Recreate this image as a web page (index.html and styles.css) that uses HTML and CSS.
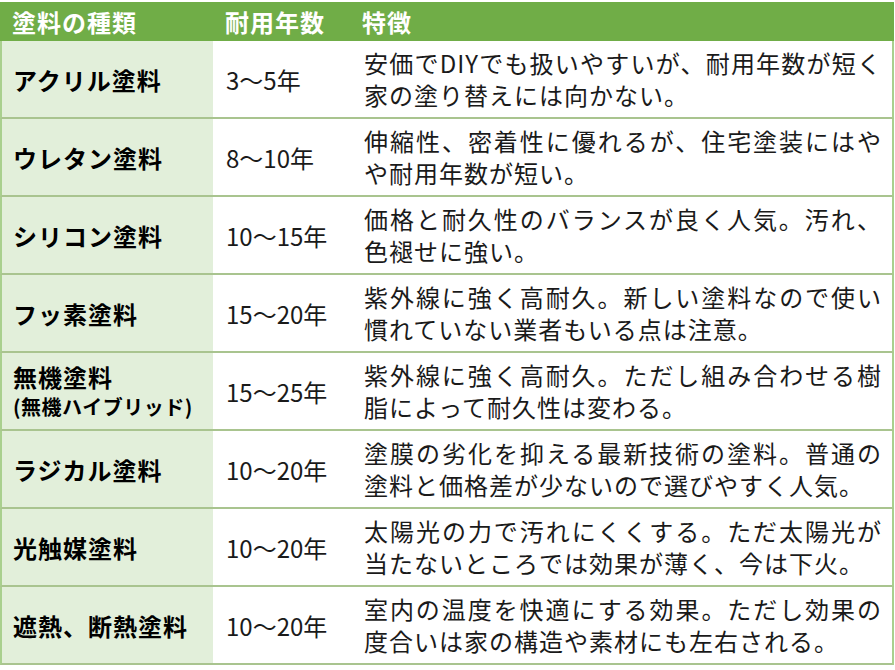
FILE: index.html
```html
<!DOCTYPE html>
<html lang="ja">
<head>
<meta charset="utf-8">
<link rel="stylesheet" href="styles.css">
</head>
<body>
<div class="table">
  <div class="head">
    <div class="hc c1">塗料の種類</div>
    <div class="hc c2">耐用年数</div>
    <div class="hc c3">特徴</div>
  </div>
  <div class="row">
    <div class="name">アクリル塗料</div>
    <div class="years">3〜5年</div>
    <div class="desc"><span class="l1">安価でDIYでも扱いやすいが、耐用年数が短く</span><span class="l2">家の塗り替えには向かない。</span></div>
  </div>
  <div class="row">
    <div class="name">ウレタン塗料</div>
    <div class="years">8〜10年</div>
    <div class="desc"><span class="l1">伸縮性、密着性に優れるが、住宅塗装にはや</span><span class="l2">や耐用年数が短い。</span></div>
  </div>
  <div class="row">
    <div class="name">シリコン塗料</div>
    <div class="years">10〜15年</div>
    <div class="desc"><span class="l1">価格と耐久性のバランスが良く人気。汚れ、</span><span class="l2">色褪せに強い。</span></div>
  </div>
  <div class="row">
    <div class="name">フッ素塗料</div>
    <div class="years">15〜20年</div>
    <div class="desc"><span class="l1">紫外線に強く高耐久。新しい塗料なので使い</span><span class="l2">慣れていない業者もいる点は注意。</span></div>
  </div>
  <div class="row">
    <div class="name"><span class="n1">無機塗料</span><span class="n2">(無機ハイブリッド)</span></div>
    <div class="years">15〜25年</div>
    <div class="desc"><span class="l1">紫外線に強く高耐久。ただし組み合わせる樹</span><span class="l2">脂によって耐久性は変わる。</span></div>
  </div>
  <div class="row">
    <div class="name">ラジカル塗料</div>
    <div class="years">10〜20年</div>
    <div class="desc"><span class="l1">塗膜の劣化を抑える最新技術の塗料。普通の</span><span class="l2">塗料と価格差が少ないので選びやすく人気。</span></div>
  </div>
  <div class="row">
    <div class="name">光触媒塗料</div>
    <div class="years">10〜20年</div>
    <div class="desc"><span class="l1">太陽光の力で汚れにくくする。ただ太陽光が</span><span class="l2">当たないところでは効果が薄く、今は下火。</span></div>
  </div>
  <div class="row">
    <div class="name">遮熱、断熱塗料</div>
    <div class="years">10〜20年</div>
    <div class="desc"><span class="l1">室内の温度を快適にする効果。ただし効果の</span><span class="l2">度合いは家の構造や素材にも左右される。</span></div>
  </div>
</div>
</body>
</html>
```
FILE: styles.css
```css
html, body {
  margin: 0;
  padding: 0;
  background: #ffffff;
}
body {
  font-family: "Noto Sans CJK JP", sans-serif;
  color: #111;
}
.table {
  width: 894px;
  margin-top: 2px;
}
.head {
  display: grid;
  grid-template-columns: 213px 139px 1fr;
  height: 39px;
  background: #70ad47;
  color: #ffffff;
  font-weight: 700;
  font-size: 24px;
  letter-spacing: 1px;
  align-items: center;
}
.hc {
  padding-left: 12px;
  line-height: 39px;
}
.hc.c3 {
  padding-left: 10px;
}
.row {
  display: grid;
  grid-template-columns: 211px 139px 1fr;
  height: 78px;
  box-sizing: border-box;
  border-left: 2px solid #a9d08e;
  border-right: 2px solid #a9d08e;
  border-bottom: 2px solid #a9c48f;
}
.name {
  background: #e2efda;
  font-weight: 700;
  font-size: 24px;
  letter-spacing: 1px;
  padding-left: 11px;
  display: flex;
  flex-direction: column;
  justify-content: center;
  color: #000;
}
.n1 {
  line-height: 31px;
}
.n2 {
  font-size: 20px;
  letter-spacing: 0.5px;
  line-height: 30px;
}
.years {
  font-size: 24px;
  padding-left: 13px;
  display: flex;
  align-items: center;
  color: #1a1a1a;
}
.desc {
  font-size: 24px;
  letter-spacing: 1px;
  padding: 0 10px 0 12px;
  display: flex;
  flex-direction: column;
  justify-content: center;
  color: #1a1a1a;
}
.l1 {
  display: block;
  line-height: 32px;
  white-space: nowrap;
  text-align: justify;
  text-align-last: justify;
}
.l2 {
  display: block;
  line-height: 32px;
  white-space: nowrap;
}
```
